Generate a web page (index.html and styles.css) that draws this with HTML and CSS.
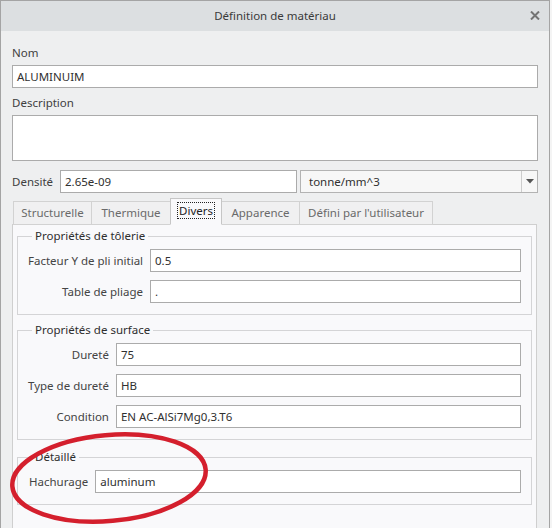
FILE: index.html
```html
<!DOCTYPE html>
<html lang="fr">
<head>
<meta charset="utf-8">
<title>Définition de matériau</title>
<link rel="stylesheet" href="styles.css">
</head>
<body>
<div class="window">
  <div class="titlebar">
    <span></span>
    <span class="title">Définition de matériau</span>
    <span class="close">
      <svg width="10" height="9" viewBox="0 0 10 9"><path d="M1 0.5 L9 8.5 M9 0.5 L1 8.5" stroke="#747474" stroke-width="2" fill="none"/></svg>
    </span>
  </div>
  <div class="content">
    <div class="lbl">Nom</div>
    <div class="input">ALUMINUIM</div>
    <div class="lbl lbl-desc">Description</div>
    <div class="input textarea"></div>
    <div class="density">
      <span class="dlabel">Densité</span>
      <div class="input dinput">2.65e-09</div>
      <div class="select">
        <span class="select-text">tonne/mm^3</span>
        <span class="select-btn"><svg width="8" height="5" viewBox="0 0 8 5"><path d="M0 0 H8 L4 4.5 Z" fill="#555"/></svg></span>
      </div>
    </div>
    <div class="tabs">
      <div class="tab t1">Structurelle</div>
      <div class="tab t2">Thermique</div>
      <div class="tab t3 active"><span class="focus">Divers</span></div>
      <div class="tab t4">Apparence</div>
      <div class="tab t5">Défini par l'utilisateur</div>
    </div>
    <div class="panel">
      <fieldset class="group g1">
        <legend>Propriétés de tôlerie</legend>
        <div class="rows">
          <span class="rlabel">Facteur Y de pli initial</span><div class="input">0.5</div>
          <span class="rlabel">Table de pliage</span><div class="input">.</div>
        </div>
      </fieldset>
      <fieldset class="group g2">
        <legend>Propriétés de surface</legend>
        <div class="rows">
          <span class="rlabel">Dureté</span><div class="input">75</div>
          <span class="rlabel">Type de dureté</span><div class="input">HB</div>
          <span class="rlabel">Condition</span><div class="input">EN AC-AlSi7Mg0,3.T6</div>
        </div>
      </fieldset>
      <fieldset class="group g3">
        <legend>Détaillé</legend>
        <div class="rows">
          <span class="rlabel">Hachurage</span><div class="input">aluminum</div>
        </div>
      </fieldset>
    </div>
  </div>
  <svg class="annotation" width="230" height="110" viewBox="0 0 230 110">
    <ellipse cx="110" cy="53" rx="97" ry="43" transform="rotate(-5 110 53)" fill="none" stroke="#d41f2d" stroke-width="4.5"/>
  </svg>
</div>
</body>
</html>
```
FILE: styles.css
```css
html, body {
  margin: 0;
  padding: 0;
  background: #f4f4f4;
}
body {
  font-family: "Noto Sans", "Open Sans", sans-serif;
  font-size: 11.5px;
  color: #404040;
}
.window {
  position: relative;
  width: 550px;
  height: 528px;
  box-sizing: border-box;
  border: 1px solid #a4a4a4;
  border-bottom: none;
  background: #eeeff0;
  display: flex;
  flex-direction: column;
  overflow: hidden;
}
.titlebar {
  height: 30px;
  flex: none;
  background: #dcdfe1;
  display: grid;
  grid-template-columns: 1fr auto 1fr;
  align-items: center;
}
.title {
  color: #3a3a3a;
  line-height: 16px;
}
.close {
  justify-self: end;
  margin-right: 9px;
  display: flex;
  margin-top: -1px;
}
.content {
  flex: 1;
  display: flex;
  flex-direction: column;
  padding: 14px 11px 0 11px;
  min-height: 0;
}
.lbl {
  line-height: 16px;
  margin-bottom: 4px;
}
.lbl-desc {
  margin-top: 7px;
}
.input {
  box-sizing: border-box;
  height: 23px;
  border: 1px solid #ababab;
  background: #fff;
  padding: 0 4px;
  line-height: 21px;
  color: #303030;
  white-space: nowrap;
  overflow: hidden;
}
.textarea {
  height: 46px;
}
.density {
  margin-top: 9px;
  display: flex;
  align-items: center;
  height: 23px;
}
.dlabel {
  width: 48px;
  flex: none;
}
.dinput {
  width: 237px;
  flex: none;
}
.select {
  margin-left: 3px;
  flex: 1;
  box-sizing: border-box;
  height: 23px;
  border: 1px solid #b3b3b3;
  background: #f7f7f7;
  display: flex;
  align-items: stretch;
}
.select-text {
  flex: 1;
  padding-left: 8px;
  line-height: 21px;
  color: #303030;
}
.select-btn {
  width: 15px;
  border-left: 1px solid #cdcdcd;
  display: flex;
  align-items: center;
  justify-content: center;
}
.tabs {
  margin-top: 6px;
  display: flex;
  align-items: flex-end;
  height: 26px;
  position: relative;
  z-index: 1;
  margin-bottom: -1px;
  padding-left: 1px;
}
.tab {
  box-sizing: border-box;
  height: 24px;
  border: 1px solid #d2d2d2;
  border-left: none;
  background: #f0f0f1;
  color: #6a6a6a;
  text-align: center;
  line-height: 22px;
  white-space: nowrap;
}
.t1 { width: 79px; border-left: 1px solid #d2d2d2; }
.t2 { width: 79px; }
.t3 { width: 51px; }
.t4 { width: 78px; }
.t5 { width: 133px; }
.tab.active {
  height: 27px;
  background: #f9f9fb;
  border: 1px solid #c6c6c6;
  border-bottom: 1px solid #f9f9fb;
  color: #222;
  line-height: 24px;
  margin-left: -1px;
  width: 52px;
}
.tab.active + .tab {
  border-left: none;
}
.focus {
  outline: 1px dotted #222;
  outline-offset: 0px;
  padding: 0 1px;
}
.panel {
  flex: 1;
  background: #f9f9fb;
  border: 1px solid #cfcfcf;
  border-bottom: none;
  padding: 0 4px;
  margin-right: 1px;
}
.group {
  border: 1px solid #d4d4d6;
  margin: 7px 0 0;
  padding: 5px 10px 11px;
  min-width: 0;
}
.g1 {
  margin-top: 3px;
}
.g3 {
  margin-top: 9px;
}
legend {
  margin-left: 4px;
  padding: 0 3px;
  line-height: 16px;
  color: #2e2e2e;
}
.rows {
  display: grid;
  grid-template-columns: auto 1fr;
  column-gap: 7px;
  row-gap: 8px;
  align-items: center;
}
.rlabel {
  text-align: right;
  color: #444;
  white-space: nowrap;
}
.g3 .rlabel {
  margin-left: 1px;
}
.annotation {
  position: absolute;
  left: -2px;
  top: 424px;
  pointer-events: none;
}
```
